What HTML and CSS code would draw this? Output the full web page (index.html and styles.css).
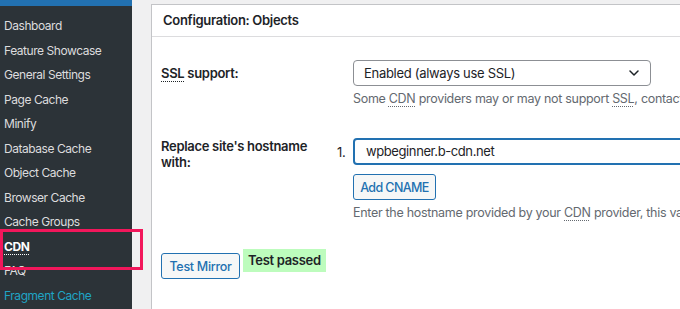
FILE: index.html
```html
<!DOCTYPE html>
<html>
<head>
<meta charset="utf-8">
<link rel="stylesheet" href="styles.css">
</head>
<body>
<div class="app">
  <aside class="sidebar">
    <div class="topbar"></div>
    <ul class="menu">
      <li>Dashboard</li>
      <li>Feature Showcase</li>
      <li>General Settings</li>
      <li>Page Cache</li>
      <li>Minify</li>
      <li>Database Cache</li>
      <li>Object Cache</li>
      <li>Browser Cache</li>
      <li>Cache Groups</li>
      <li class="current"><span class="abbr">CDN</span></li>
      <li>FAQ</li>
      <li class="accent">Fragment Cache</li>
    </ul>
  </aside>
  <main class="main">
    <section class="panel">
      <h2 class="panel-title">Configuration: Objects</h2>
      <div class="panel-body">
        <div class="row">
          <div class="label label-mid"><span class="abbr">SSL</span> support:</div>
          <div class="control">
            <div class="select">
              <span>Enabled (always use SSL)</span>
              <svg class="chev" width="10" height="6" viewBox="0 0 10 6"><path d="M1 1l4 4 4-4" fill="none" stroke="#1d2327" stroke-width="1.5" stroke-linecap="round" stroke-linejoin="round"/></svg>
            </div>
            <p class="desc">Some <span class="abbr">CDN</span> providers may or may not support <span class="abbr">SSL</span>, contact your vendor for more information.</p>
          </div>
        </div>
        <div class="row row2">
          <div class="label">Replace site's hostname with:</div>
          <div class="control">
            <div class="hostline">
              <span class="num">1.</span>
              <div class="input">wpbeginner.b-cdn.net</div>
            </div>
            <button class="btn btn-add">Add CNAME</button>
            <p class="desc">Enter the hostname provided by your <span class="abbr">CDN</span> provider, this value will replace your site's hostname in the HTML.</p>
          </div>
        </div>
        <div class="testrow">
          <button class="btn">Test Mirror</button>
          <span class="passed">Test passed</span>
        </div>
      </div>
    </section>
  </main>
</div>
</body>
</html>
```
FILE: styles.css
```css
* { box-sizing: border-box; }
html, body { margin: 0; padding: 0; }
body {
  width: 680px;
  height: 309px;
  overflow: hidden;
  font-family: Inter, "Noto Sans", sans-serif;
  font-size: 12.5px;
  letter-spacing: -0.3px;
  color: #1d2327;
  background: #f0f0f1;
}
.app { display: flex; height: 309px; }
.sidebar {
  width: 132px;
  flex: none;
  background: #2c3338;
  position: relative;
}
.topbar { height: 6px; background: #2271b1; }
.menu {
  list-style: none;
  margin: 0;
  padding: 8px 0 0 0;
}
.menu li {
  height: 24.5px;
  line-height: 24.5px;
  padding-left: 4px;
  font-size: 12px;
  letter-spacing: -0.45px;
  color: #dcdcde;
  white-space: nowrap;
}
.menu li.current {
  color: #fff;
  font-weight: 700;
  position: relative;
}
.menu li.current::after {
  content: "";
  position: absolute;
  left: 0;
  top: -6px;
  width: 137px;
  height: 35px;
  border: 3px solid #f2175b;
}
.menu li.accent { color: #1fa3c4; }
.abbr {
  text-decoration: underline dotted;
  text-underline-offset: 3px;
  text-decoration-thickness: 1px;
}
.main {
  flex: 1;
  padding: 4px 0 0 19px;
  overflow: hidden;
}
.panel {
  background: #fff;
  border: 1px solid #c3c4c7;
  border-right: none;
  height: 320px;
}
.panel-title {
  margin: 0;
  height: 32px;
  line-height: 30px;
  padding-left: 11px;
  font-size: 13px;
  font-weight: 600;
  border-bottom: 1px solid #dcdcde;
  white-space: nowrap;
}
.panel-body { padding: 23px 0 0 9px; }
.row {
  display: grid;
  grid-template-columns: 172px 1fr;
  column-gap: 20px;
}
.label {
  font-weight: 600;
  font-size: 13px;
  line-height: 16px;
  padding-top: 6px;
}
.label-mid { padding-top: 5px; }
.control { min-width: 0; white-space: nowrap; }
.select {
  width: 298px;
  height: 26px;
  border: 1px solid #8c8f94;
  border-radius: 4px;
  display: flex;
  align-items: center;
  justify-content: space-between;
  padding: 0 10px 0 10px;
  font-size: 13px;
}
.chev { margin-right: 1px; }
.desc {
  margin: 5px 0 0 0;
  color: #646970;
  line-height: 16px;
  white-space: nowrap;
}
.row2 { margin-top: 31px; }
.row2 .label { padding-top: 0; }
.hostline {
  display: flex;
  align-items: center;
  margin-left: -16px;
}
.num { width: 15px; flex: none; font-size: 13px; color: #1d2327; }
.input {
  flex: none;
  width: 400px;
  height: 27px;
  border: 2px solid #2271b1;
  border-radius: 4px;
  padding-left: 11px;
  line-height: 23px;
  font-size: 13px;
  letter-spacing: -0.4px;
  margin-left: 1px;
}
.btn {
  display: block;
  font-family: inherit;
  font-size: 12.5px;
  font-weight: 500;
  letter-spacing: -0.3px;
  color: #2271b1;
  background: #f6f7f7;
  border: 1px solid #2271b1;
  border-radius: 3px;
  height: 26px;
  padding: 0 11px;
  margin: 9px 0 0 0;
}
.btn-add { width: 83px; padding: 0; letter-spacing: -0.6px; }
.row2 .desc { margin-top: 5px; }
.testrow {
  display: flex;
  align-items: flex-start;
  margin-top: 28px;
  column-gap: 3px;
}
.testrow .btn { margin: 4px 0 0 0; width: 79px; padding: 0; }
.passed {
  background: #bdfcbd;
  font-weight: 600;
  font-size: 13px;
  height: 23px;
  line-height: 23px;
  padding: 0 5px;
}
```
